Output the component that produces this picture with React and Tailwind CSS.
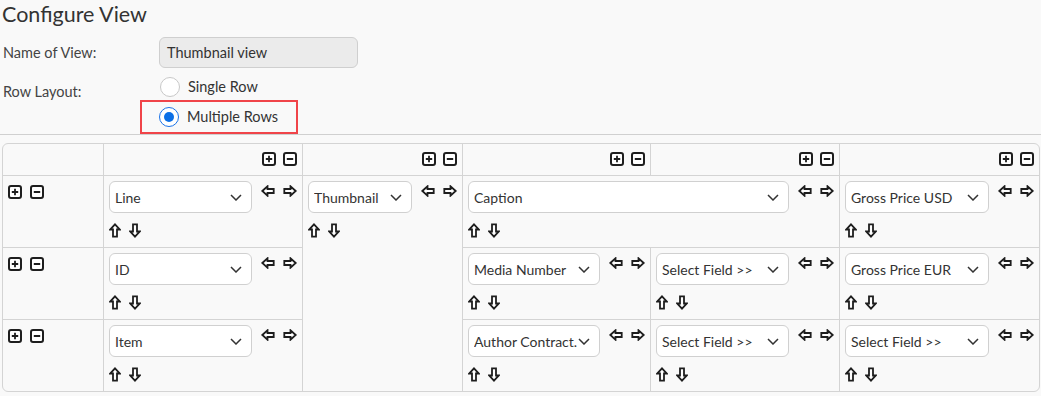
import React from 'react';

const font = { fontFamily: 'Lato, "Noto Sans", sans-serif' };

const PlusBox = () => (
  <svg width="14" height="14" viewBox="0 0 14 14" className="shrink-0">
    <rect x="1" y="1" width="12" height="12" rx="2" fill="#fff" stroke="#1e1e1e" strokeWidth="2" />
    <path d="M3.8 7h6.4M7 3.8v6.4" stroke="#1e1e1e" strokeWidth="1.8" />
  </svg>
);

const MinusBox = () => (
  <svg width="14" height="14" viewBox="0 0 14 14" className="shrink-0">
    <rect x="1" y="1" width="12" height="12" rx="2" fill="#fff" stroke="#1e1e1e" strokeWidth="2" />
    <path d="M3.8 7h6.4" stroke="#1e1e1e" strokeWidth="1.8" />
  </svg>
);

const ArrowLeft = () => (
  <svg width="14" height="12" viewBox="0 0 14 12" className="shrink-0">
    <path d="M1.3 6 6.5 1.3V4h6.2v4H6.5v2.7Z" fill="#fff" stroke="#1e1e1e" strokeWidth="1.8" />
  </svg>
);

const ArrowRight = () => (
  <svg width="14" height="12" viewBox="0 0 14 12" className="shrink-0">
    <path d="M12.7 6 7.5 1.3V4H1.3v4h6.2v2.7Z" fill="#fff" stroke="#1e1e1e" strokeWidth="1.8" />
  </svg>
);

const ArrowUp = () => (
  <svg width="12" height="15" viewBox="0 0 12 15" className="shrink-0">
    <path d="M6 1.3 10.7 6.5H8v7.2H4V6.5H1.3Z" fill="#fff" stroke="#1e1e1e" strokeWidth="1.8" />
  </svg>
);

const ArrowDown = () => (
  <svg width="12" height="15" viewBox="0 0 12 15" className="shrink-0">
    <path d="M6 13.7 10.7 8.5H8V1.3H4v7.2H1.3Z" fill="#fff" stroke="#1e1e1e" strokeWidth="1.8" />
  </svg>
);

const Chevron = () => (
  <svg width="12" height="7" viewBox="0 0 12 7" className="shrink-0">
    <path d="M1 1l5 5 5-5" fill="none" stroke="#333" strokeWidth="1.5" />
  </svg>
);

const HeaderCell = ({ first }) => (
  <div className={`${first ? '' : 'border-l'} border-[#d4d4d4] flex justify-end gap-[7px] pt-[8px] pr-[5px]`}>
    {!first && (
      <>
        <PlusBox />
        <MinusBox />
      </>
    )}
  </div>
);

const RowControls = () => (
  <div className="border-t border-[#d4d4d4] flex gap-[8px] pt-[9px] pl-[5px]">
    <PlusBox />
    <MinusBox />
  </div>
);

const FieldCell = ({ label, className = '' }) => (
  <div className={`border-t border-l border-[#d4d4d4] flex flex-col pt-[5px] pl-[5px] pr-[5px] ${className}`}>
    <div className="flex items-start gap-[9px]">
      <div className="flex-1 min-w-0 h-[32px] bg-white border border-[#d0d0d0] rounded-[6px] flex items-center pl-[5px] pr-[9px] text-[14px] text-[#333]">
        <span className="flex-1 min-w-0 whitespace-nowrap overflow-hidden">{label}</span>
        <Chevron />
      </div>
      <div className="flex gap-[8px] pt-[4px]">
        <ArrowLeft />
        <ArrowRight />
      </div>
    </div>
    <div className="flex gap-[8px] mt-[10px]">
      <ArrowUp />
      <ArrowDown />
    </div>
  </div>
);

const Radio = ({ checked }) => (
  checked ? (
    <span className="w-[20px] h-[20px] rounded-full border-[1.5px] border-[#1a73e8] bg-white flex items-center justify-center shrink-0">
      <span className="w-[10px] h-[10px] rounded-full bg-[#0b6fe6]" />
    </span>
  ) : (
    <span className="w-[20px] h-[20px] rounded-full border border-[#c8c8c8] bg-white shrink-0" />
  )
);

export default function App() {
  return (
    <div className="w-[1041px] h-[396px] bg-[#f9f9f9] text-[#333] overflow-hidden" style={font}>
      <h1 className="pl-[2px] text-[21.5px] leading-[28px] text-[#333] font-normal">Configure View</h1>

      <div className="flex items-center mt-[9px]">
        <div className="w-[159px] pl-[3px] text-[14.5px] text-[#444]">Name of View:</div>
        <div className="w-[199px] h-[31px] bg-[#ebebeb] border border-[#cfcfcf] rounded-[6px] flex items-center pl-[7px] text-[14.5px] text-[#333]">
          Thumbnail view
        </div>
      </div>

      <div className="flex mt-[6px]">
        <div className="w-[140px] pl-[3px] pt-[8px] text-[14.5px] leading-[20px] text-[#444]">Row Layout:</div>
        <div className="flex flex-col">
          <div className="flex items-center gap-[8px] h-[26px] pl-[20px] text-[14.5px] text-[#333]">
            <Radio />
            <span>Single Row</span>
          </div>
          <div className="flex items-center gap-[8px] w-[158px] h-[34px] border-2 border-[#f04449] pl-[17px] text-[14.5px] text-[#333]">
            <Radio checked />
            <span>Multiple Rows</span>
          </div>
        </div>
      </div>

      <div className="border-t border-[#d0d0d0]" />

      <div className="mt-[8px] ml-[2px] w-[1038px] border border-[#d4d4d4] rounded-[6px] overflow-hidden grid grid-cols-[100px_199px_160px_188px_189px_200px] grid-rows-[31px_72px_72px_72px]">
        <HeaderCell first />
        <HeaderCell />
        <HeaderCell />
        <HeaderCell />
        <HeaderCell />
        <HeaderCell />

        <RowControls />
        <FieldCell label="Line" />
        <FieldCell label="Thumbnail" className="row-span-3" />
        <FieldCell label="Caption" className="col-span-2" />
        <FieldCell label="Gross Price USD" />

        <RowControls />
        <FieldCell label="ID" />
        <FieldCell label="Media Number" />
        <FieldCell label="Select Field >>" />
        <FieldCell label="Gross Price EUR" />

        <RowControls />
        <FieldCell label="Item" />
        <FieldCell label="Author Contract." />
        <FieldCell label="Select Field >>" />
        <FieldCell label="Select Field >>" />
      </div>
    </div>
  );
}
